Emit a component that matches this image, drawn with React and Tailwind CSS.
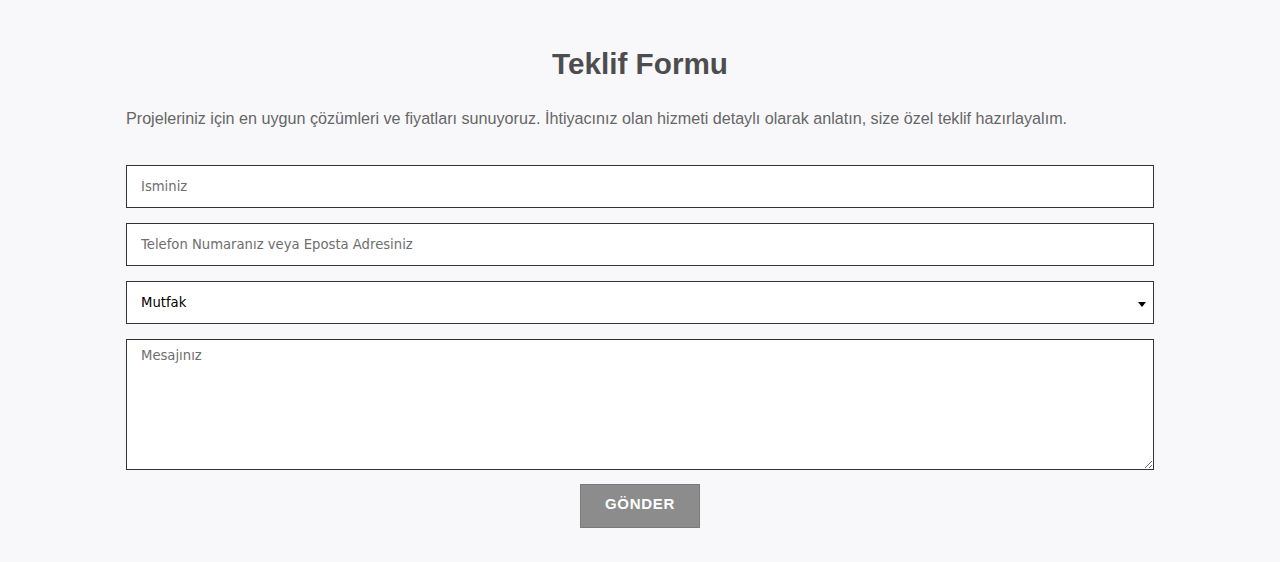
export default function App() {
  return (
    <div className="min-h-screen bg-[#f8f8fa] font-['Liberation_Sans',Arial,sans-serif]">
      <div className="mx-auto w-[1028px] pt-[44px] pb-8">
        <h1 className="text-center text-[29.7px] leading-[40px] font-bold text-[#4d4d4f]">Teklif Formu</h1>
        <p className="mt-[24px] text-[16.15px] leading-[20px] text-[#666]">
          Projeleriniz için en uygun çözümleri ve fiyatları sunuyoruz. İhtiyacınız olan hizmeti detaylı olarak anlatın, size özel teklif hazırlayalım.
        </p>

        <form className="mt-[37px] flex flex-col gap-[15px] font-['DejaVu_Sans',Verdana,sans-serif] text-[13.2px]">
          <input
            type="text"
            placeholder="İsminiz"
            className="h-[43px] w-full border border-[#333] bg-white px-[14px] leading-[20px] text-[#333] placeholder-[#6e6e6e] outline-none"
          />
          <input
            type="text"
            placeholder="Telefon Numaranız veya Eposta Adresiniz"
            className="h-[43px] w-full border border-[#333] bg-white px-[14px] text-[#333] placeholder-[#6e6e6e] outline-none"
          />
          <div className="relative">
            <select
              defaultValue="Mutfak"
              className="h-[43px] w-full appearance-none border border-[#333] bg-white px-[14px] text-black outline-none"
            >
              <option>Mutfak</option>
              <option>Banyo</option>
              <option>Salon</option>
            </select>
            <span className="pointer-events-none absolute right-[8px] top-[21px] h-0 w-0 border-x-[4px] border-t-[5px] border-x-transparent border-t-black" />
          </div>
          <textarea
            placeholder="Mesajınız"
            className="h-[131px] w-full border border-[#333] bg-white px-[14px] py-[6px] text-[#333] placeholder-[#6e6e6e] outline-none"
          />
          <div className="-mt-px flex justify-center">
            <button
              type="button"
              className="h-[44px] w-[120px] border border-[#7a7a7a] bg-[#8c8c8c] pb-[3px] font-['Liberation_Sans',Arial,sans-serif] text-[15px] font-bold tracking-[0.7px] text-white"
            >
              GÖNDER
            </button>
          </div>
        </form>
      </div>
    </div>
  );
}
